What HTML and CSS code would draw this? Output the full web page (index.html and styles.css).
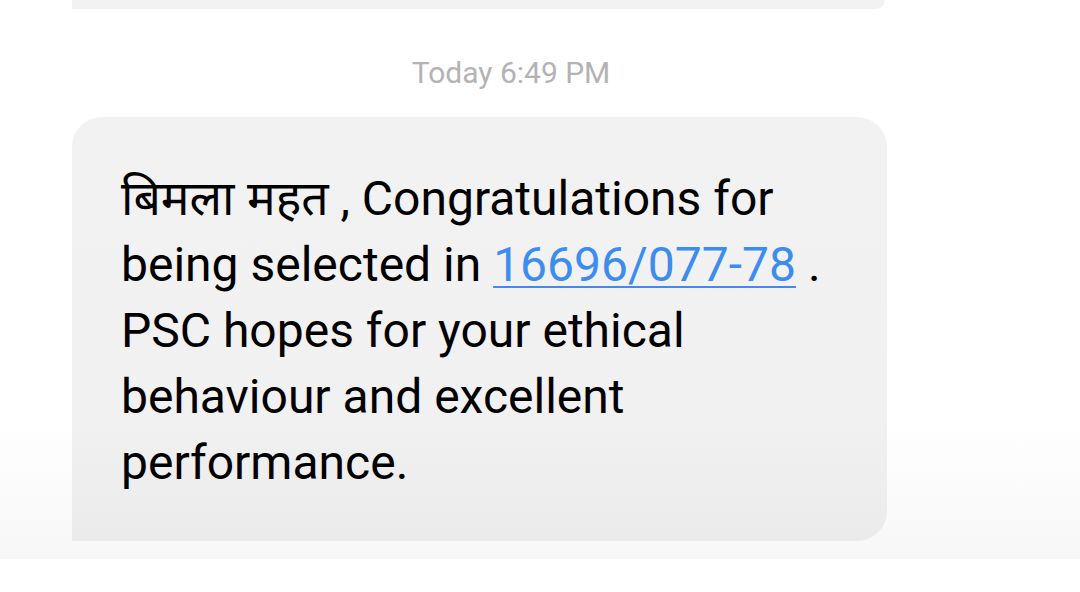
FILE: index.html
```html
<!DOCTYPE html>
<html lang="en">
<head>
<meta charset="utf-8">
<title>Message</title>
<link rel="stylesheet" href="styles.css">
</head>
<body>
<main class="thread">
  <div class="bubble-prev"></div>
  <div class="timestamp">Today 6:49 PM</div>
  <div class="bubble">
    <p class="msg"><span class="deva">बिमला महत</span> , Congratulations for being selected in <a class="link" href="#">16696/077-78</a> . PSC hopes for your ethical behaviour and excellent performance.</p>
  </div>
</main>
<footer class="footer"></footer>
</body>
</html>
```
FILE: styles.css
```css
html, body {
  margin: 0;
  padding: 0;
  background: #ffffff;
}
body {
  width: 1080px;
  height: 592px;
  overflow: hidden;
  display: flex;
  flex-direction: column;
  font-family: Roboto, "Noto Sans", "Noto Sans Devanagari", sans-serif;
}
.thread {
  height: 559px;
  display: flex;
  flex-direction: column;
  align-items: flex-start;
  padding-left: 72px;
  box-sizing: border-box;
  background: linear-gradient(to bottom, #ffffff 0px, #ffffff 420px, #f7f7f7 559px);
}
.bubble-prev {
  width: 813px;
  height: 9px;
  background: #f2f2f2;
  border-radius: 0 0 32px 0;
}
.timestamp {
  align-self: stretch;
  margin-left: -72px;
  padding-right: 58px;
  margin-top: 48px;
  height: 60px;
  text-align: center;
  color: #b3b3b3;
  font-size: 30px;
  line-height: 32px;
}
.bubble {
  width: 815px;
  height: 424px;
  box-sizing: border-box;
  padding: 49px 50px 0 49px;
  background: linear-gradient(to bottom, #f2f2f2 0%, #f1f1f1 70%, #ebebeb 100%);
  border-radius: 30px 30px 30px 0;
}
.msg {
  margin: 0;
  font-size: 48px;
  line-height: 66px;
  color: #000000;
}
.deva {
  font-family: "Noto Sans Devanagari", "Noto Sans", sans-serif;
  line-height: 20px;
}
.link {
  color: #3d8cf0;
  text-decoration: underline;
  text-decoration-thickness: 2px;
  text-underline-offset: 5px;
}
.footer {
  flex: 1;
  background: #ffffff;
}
```
